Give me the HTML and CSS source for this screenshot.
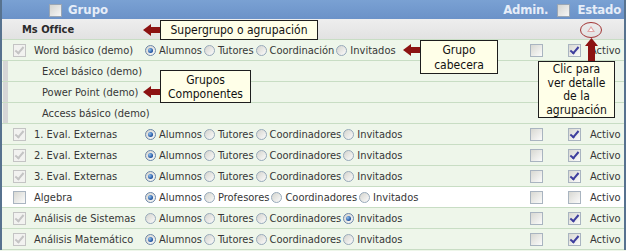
FILE: index.html
```html
<!DOCTYPE html>
<html lang="es">
<head>
    <meta charset="UTF-8">
    <meta name="viewport" content="width=device-width, initial-scale=1.0">
    <title>Grupos</title>
    <link rel="stylesheet" href="styles.css">
</head>
<body>
    <div class="panel">
        <table class="grid">
            <colgroup>
                <col class="c-name">
                <col class="c-roles">
                <col class="c-admin">
                <col class="c-estado">
            </colgroup>
            <thead>
                <tr class="head">
                    <th colspan="4">
                        <div class="head-bar">
                            <span class="h-grupo"><span class="cb hcb"></span>Grupo</span>
                            <span class="h-right">Admin.<span class="cb hcb"></span>Estado</span>
                        </div>
                    </th>
                </tr>
            </thead>
            <tbody>
                <tr class="super">
                    <td colspan="3" class="super-name">Ms Office</td>
                    <td class="toggle"><span class="tri"></span></td>
                </tr>
                <tr>
                    <td class="name"><span class="cb dis on"></span>Word básico (demo)</td>
                    <td class="roles">
                        <span class="rd on"></span>Alumnos<span class="rd"></span>Tutores<span class="rd"></span>Coordinación<span class="rd"></span>Invitados
                    </td>
                    <td class="admin"><span class="cb"></span></td>
                    <td class="estado"><span class="cb on"></span>Activo</td>
                </tr>
                <tr class="sub"><td colspan="4" class="sub-name">Excel básico (demo)</td></tr>
                <tr class="sub"><td colspan="4" class="sub-name">Power Point (demo)</td></tr>
                <tr class="sub"><td colspan="4" class="sub-name">Access básico (demo)</td></tr>
                <tr>
                    <td class="name"><span class="cb dis on"></span>1. Eval. Externas</td>
                    <td class="roles">
                        <span class="rd on"></span>Alumnos<span class="rd"></span>Tutores<span class="rd"></span>Coordinadores<span class="rd"></span>Invitados
                    </td>
                    <td class="admin"><span class="cb"></span></td>
                    <td class="estado"><span class="cb on"></span>Activo</td>
                </tr>
                <tr>
                    <td class="name"><span class="cb dis on"></span>2. Eval. Externas</td>
                    <td class="roles">
                        <span class="rd on"></span>Alumnos<span class="rd"></span>Tutores<span class="rd"></span>Coordinadores<span class="rd"></span>Invitados
                    </td>
                    <td class="admin"><span class="cb"></span></td>
                    <td class="estado"><span class="cb on"></span>Activo</td>
                </tr>
                <tr>
                    <td class="name"><span class="cb dis on"></span>3. Eval. Externas</td>
                    <td class="roles">
                        <span class="rd on"></span>Alumnos<span class="rd"></span>Tutores<span class="rd"></span>Coordinadores<span class="rd"></span>Invitados
                    </td>
                    <td class="admin"><span class="cb"></span></td>
                    <td class="estado"><span class="cb on"></span>Activo</td>
                </tr>
                <tr class="plain">
                    <td class="name"><span class="cb"></span>Algebra</td>
                    <td class="roles">
                        <span class="rd on"></span>Alumnos<span class="rd"></span>Profesores<span class="rd"></span>Coordinadores<span class="rd"></span>Invitados
                    </td>
                    <td class="admin"><span class="cb"></span></td>
                    <td class="estado"><span class="cb"></span>Activo</td>
                </tr>
                <tr>
                    <td class="name"><span class="cb dis on"></span>Análisis de Sistemas</td>
                    <td class="roles">
                        <span class="rd"></span>Alumnos<span class="rd"></span>Tutores<span class="rd"></span>Coordinadores<span class="rd on"></span>Invitados
                    </td>
                    <td class="admin"><span class="cb"></span></td>
                    <td class="estado"><span class="cb on"></span>Activo</td>
                </tr>
                <tr>
                    <td class="name"><span class="cb dis on"></span>Análisis Matemático</td>
                    <td class="roles">
                        <span class="rd on"></span>Alumnos<span class="rd"></span>Tutores<span class="rd"></span>Coordinadores<span class="rd"></span>Invitados
                    </td>
                    <td class="admin"><span class="cb"></span></td>
                    <td class="estado"><span class="cb on"></span>Activo</td>
                </tr>
            </tbody>
        </table>

        <!-- annotations -->
        <svg class="arrow arrow-super" width="19" height="12" viewBox="0 0 19 12"><polygon points="0,6 8,0 8,3 19,3 19,9 8,9 8,12"/></svg>
        <div class="note note-super">Supergrupo o agrupación</div>

        <svg class="arrow arrow-head" width="19" height="12" viewBox="0 0 19 12"><polygon points="0,6 8,0 8,3 19,3 19,9 8,9 8,12"/></svg>
        <div class="note note-head">Grupo<br>cabecera</div>

        <svg class="arrow arrow-comp" width="19" height="12" viewBox="0 0 19 12"><polygon points="0,6 8,0 8,3 19,3 19,9 8,9 8,12"/></svg>
        <div class="note note-comp">Grupos<br>Componentes</div>

        <svg class="ring" width="24" height="18" viewBox="0 0 24 18"><ellipse cx="12" cy="9" rx="10.5" ry="7.5"/></svg>
        <svg class="arrow arrow-up" width="13" height="24" viewBox="0 0 13 24"><polygon points="6.5,0 13,8 10,8 10,24 3,24 3,8 0,8"/></svg>
        <div class="note note-clic">Clic para<br>ver detalle<br>de la<br>agrupación</div>
    </div>
</body>
</html>
```

FILE: styles.css
```css
body {
    margin: 0;
    font-family: "DejaVu Sans Condensed", "DejaVu Sans", sans-serif;
    font-size: 11px;
    color: #363636;
}

.panel {
    position: relative;
    width: 626px;
    height: 251px;
    overflow: hidden;
    background-color: #eef6ea;
}

.grid {
    width: 626px;
    table-layout: fixed;
    border-collapse: separate;
    border-spacing: 0;
    border-left: 2px solid #57728f;
    border-right: 2px solid #57728f;
}

.c-name { width: 140px; }
.c-roles { width: 380px; }
.c-admin { width: 38px; }
.c-estado { width: 64px; }

.grid td, .grid th {
    padding: 0;
    white-space: nowrap;
    overflow: hidden;
}

/* header */
.head th {
    height: 19px;
    background: linear-gradient(#7aa1d3, #6b92c8);
    color: #e6edf8;
    font-size: 13px;
    font-weight: bold;
    text-align: left;
}

.head-bar {
    display: flex;
    justify-content: space-between;
    align-items: center;
    padding: 0 3px 0 47px;
}

.h-right {
    letter-spacing: -0.2px;
}

.hcb {
    margin: 0 6px 0 0;
    vertical-align: -1px;
}

.h-right .hcb {
    margin: 0 7px 0 9px;
}

/* rows */
.grid tbody td {
    height: 20px;
    border-bottom: 1px solid #c8ddc4;
    background-color: #eef6ea;
}

.super td {
    height: 18px;
    background: linear-gradient(#eeeeee, #e2e2e2) !important;
    border-bottom: 1px solid #d0d0d0;
}

.super-name {
    padding-left: 20px !important;
    font-weight: bold;
    color: #2a2a2a;
}

.toggle {
    padding-left: 27px !important;
}

.tri {
    display: inline-block;
    width: 0;
    height: 0;
    border-left: 4px solid transparent;
    border-right: 4px solid transparent;
    border-bottom: 6px solid #e2a6a6;
    position: relative;
    vertical-align: 1px;
}

.tri::after {
    content: "";
    position: absolute;
    left: -2px;
    top: 2px;
    border-left: 2px solid transparent;
    border-right: 2px solid transparent;
    border-bottom: 3px solid #ffffff;
}

.plain td {
    background-color: #ffffff !important;
}

.name {
    padding-left: 11px !important;
}

.name .cb {
    margin-right: 8px;
}

.sub-name {
    padding-left: 40px !important;
    background: linear-gradient(to right, #eef6ea 0, #eef6ea 1px, #d6d6d6 1px, #d6d6d6 6px, #eef6ea 6px) !important;
}

.roles {
    padding-left: 3px !important;
}

.admin {
    padding-left: 8px !important;
}

.estado {
    padding-left: 8px !important;
}

.estado .cb {
    margin-right: 9px;
}

/* checkboxes */
.cb {
    display: inline-block;
    box-sizing: border-box;
    width: 13px;
    height: 13px;
    border: 1px solid #a9b4c0;
    background: linear-gradient(135deg, #d8d8d2, #fbfbfb);
    vertical-align: -3px;
    position: relative;
}

.cb.dis {
    border-color: #c4c4c4;
    background: #f2f2f0;
}

.cb.on::after {
    content: "";
    position: absolute;
    left: 3px;
    top: 0px;
    width: 3px;
    height: 7px;
    border-right: 2px solid #3e3e9e;
    border-bottom: 2px solid #3e3e9e;
    transform: rotate(40deg);
}

.cb.dis.on::after {
    border-color: #c4c4c4;
}

.hcb {
    border-color: #9aa6b4;
    background: linear-gradient(135deg, #d4d4d0, #f6f6f6);
}

/* radios */
.rd {
    display: inline-block;
    box-sizing: border-box;
    width: 11px;
    height: 11px;
    border: 1px solid #97a9ba;
    border-radius: 50%;
    background: linear-gradient(135deg, #d4d4ce, #fbfbfb);
    vertical-align: -2px;
    margin: 0 3px 0 2px;
    position: relative;
}

.roles .rd:first-child {
    margin-left: 0;
}

.rd.on {
    border-color: #6c86a8;
}

.rd.on::after {
    content: "";
    position: absolute;
    left: 2px;
    top: 2px;
    width: 5px;
    height: 5px;
    border-radius: 50%;
    background: radial-gradient(circle at 35% 35%, #8fc0f0, #1c4f9c 70%);
}

/* annotations */
.note {
    position: absolute;
    box-sizing: border-box;
    background-color: #ffffe8;
    border: 1px solid #1e1e1e;
    color: #111;
    font-family: "DejaVu Sans Condensed", "DejaVu Sans", sans-serif;
    font-size: 12px;
    text-align: center;
    line-height: 14px;
}

.note-super {
    left: 160px;
    top: 20px;
    width: 158px;
    height: 20px;
    line-height: 18px;
}

.note-head {
    left: 420px;
    top: 40px;
    width: 78px;
    height: 34px;
    padding-top: 2px;
    line-height: 15px;
}

.note-comp {
    left: 160px;
    top: 70px;
    width: 91px;
    height: 33px;
    padding-top: 2px;
    line-height: 14px;
}

.note-clic {
    left: 538px;
    top: 61px;
    width: 77px;
    height: 57px;
    padding-top: 1px;
    line-height: 13.5px;
}

.arrow {
    position: absolute;
    fill: #8c1212;
}

.arrow-super { left: 143px; top: 24px; }
.arrow-head { left: 403px; top: 44px; }
.arrow-comp { left: 143px; top: 86px; }
.arrow-up { left: 585px; top: 38px; }

.ring {
    position: absolute;
    left: 579px;
    top: 21px;
    fill: none;
    stroke: #a23434;
    stroke-width: 1;
}
```
